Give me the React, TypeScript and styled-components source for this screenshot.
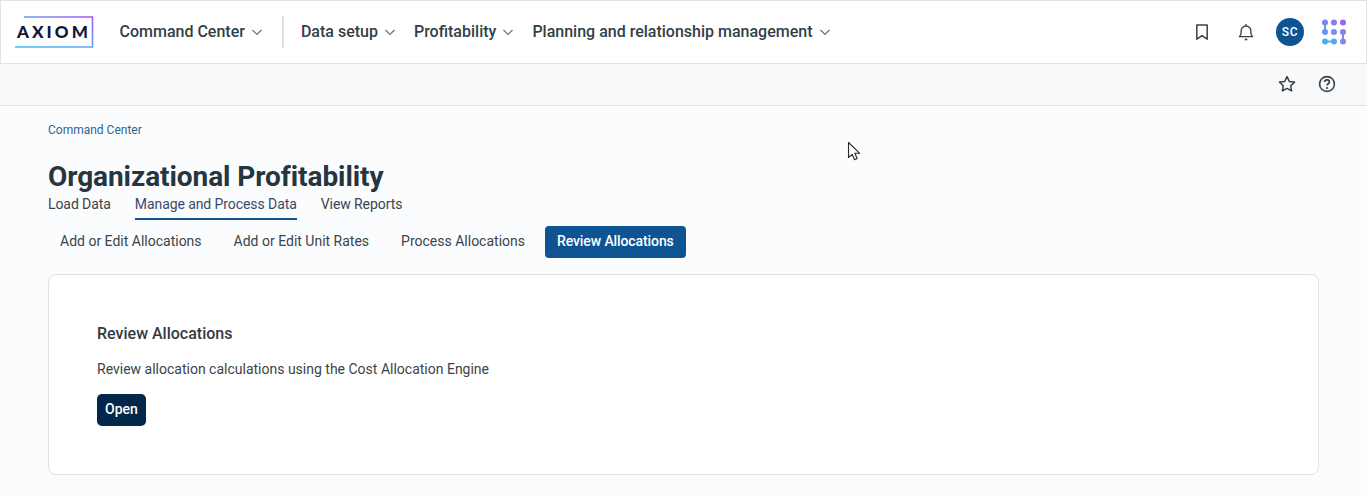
import React from "react";
import styled, { createGlobalStyle } from "styled-components";

const Global = createGlobalStyle`
  html, body { margin: 0; padding: 0; background: #fbfcfe; }
  body { font-family: Roboto, "Liberation Sans", sans-serif; color: #323a3f; }
  * { box-sizing: border-box; }
`;
const Page = styled.div`
  width: 1367px; height: 496px; overflow: hidden; position: relative; background: #fbfcfe;
`;
const Header = styled.header`
  height: 64px; background: #fff; border: 1px solid #dfe2e7;
  display: flex; align-items: center; padding: 0 19px 1px 14px;
`;
const Logo = styled.div`
  position: relative; width: 79px; height: 32px; flex: none;
  display: flex; align-items: center; justify-content: center;
  svg { position: absolute; inset: 0; }
`;
const LogoText = styled.span`
  font-family: Lato, sans-serif; font-weight: 900; font-size: 17px;
  letter-spacing: 3.1px; color: #14133b; padding-right: 1px; line-height: 1;
`;
const Nav = styled.nav`
  display: flex; align-items: center; margin-left: 25.5px;
`;
const NavItem = styled.div<{ $gap: number }>`
  display: flex; align-items: center; gap: 5px; font-size: 16px; font-weight: 500;
  color: #323f48; margin-right: ${p => p.$gap}px; white-space: nowrap;
  svg { color: #6b7278; }
`;
const NavDivider = styled.div`
  width: 2px; height: 32px; background: #d9dce1; margin-right: 17px;
`;
const HeaderActions = styled.div`
  margin-left: auto; display: flex; align-items: center;
`;
const ActionIcon = styled.span<{ $mr: number }>`
  display: flex; margin-right: ${p => p.$mr}px; color: #3a4044;
`;
const Avatar = styled.div`
  width: 28px; height: 28px; border-radius: 50%; background: #0f5492; color: #fff;
  font-size: 12px; font-weight: 500; letter-spacing: 0.6px;
  display: flex; align-items: center; justify-content: center; margin-right: 17px;
`;
const SubBar = styled.div`
  height: 42px; background: #f8f9fb; border-bottom: 1px solid #dfe2e7;
  display: flex; align-items: center; justify-content: flex-end; gap: 20px; padding: 0 30px 1px 0;
  color: #3a4044;
`;
const Main = styled.main`
  padding: 0 48px;
`;
const Crumb = styled.div`
  font-size: 12px; line-height: 14px; color: #2d6590; padding-top: 17px;
`;
const Title = styled.h1`
  margin: 22px 0 0; font-size: 28px; line-height: 36px; font-weight: 700; color: #263640;
  letter-spacing: -0.07px;
`;
const TopTabs = styled.div`
  display: flex; gap: 24px; margin-top: -1px; height: 26px;
`;
const TopTab = styled.div<{ $active?: boolean }>`
  font-size: 14px; line-height: 16px; padding-top: 2px; height: 26px; letter-spacing: -0.08px;
  color: ${p => (p.$active ? "#3b4a68" : "#3c4449")};
  border-bottom: 2px solid ${p => (p.$active ? "#0f5492" : "transparent")};
  white-space: nowrap;
`;
const SubTabs = styled.div`
  display: flex; gap: 8px; margin-top: 6px;
`;
const SubTab = styled.div<{ $active?: boolean }>`
  height: 32px; padding: 0 12px 2px; border-radius: 4px; font-size: 14px;
  display: flex; align-items: center; white-space: nowrap;
  font-weight: ${p => (p.$active ? 500 : 400)};
  letter-spacing: ${p => (p.$active ? "-0.1px" : "0")};
  color: ${p => (p.$active ? "#fff" : "#3c4449")};
  background: ${p => (p.$active ? "#0f5492" : "transparent")};
`;
const Card = styled.section`
  margin-top: 16px; width: 1271px; height: 201px; background: #fff;
  border: 1px solid #dfe2e7; border-radius: 8px; padding: 49px 48px 48px;
`;
const CardTitle = styled.h2`
  margin: 0; font-size: 16px; line-height: 20px; font-weight: 500; color: #323a3f;
`;
const CardText = styled.p`
  margin: 16px 0 0; font-size: 14px; line-height: 18px; color: #3c4449;
`;
const OpenButton = styled.button`
  display: block; margin-top: 16px; height: 32px; width: 49px; padding: 0 0 2px; border: 0;
  border-radius: 5px; background: #03274a; color: #fff;
  font: 500 14px Roboto, sans-serif;
`;
const Cursor = styled.svg`
  position: absolute; left: 847px; top: 141px;
`;

const Chevron = () => (
  <svg width="14" height="14" viewBox="0 0 14 14" fill="none" stroke="currentColor" strokeWidth="1.2">
    <path d="M2.5 5l4.5 4.5L11.5 5" />
  </svg>
);

export default function App() {
  return (
    <Page>
      <Global />
      <Header>
        <Logo>
          <svg width="79" height="32" viewBox="0 0 79 32" fill="none">
            <defs>
              <linearGradient id="lg" x1="0" y1="1" x2="1" y2="0">
                <stop offset="0" stopColor="#38bdf8" />
                <stop offset="0.5" stopColor="#60a5fa" />
                <stop offset="1" stopColor="#a855f7" />
              </linearGradient>
            </defs>
            <path d="M9 1H77.500V31H0" stroke="url(#lg)" strokeWidth="1.6" />
          </svg>
          <LogoText>AXIOM</LogoText>
        </Logo>
        <Nav>
          <NavItem $gap={18}>Command Center <Chevron /></NavItem>
          <NavDivider />
          <NavItem $gap={17}>Data setup <Chevron /></NavItem>
          <NavItem $gap={17}>Profitability <Chevron /></NavItem>
          <NavItem $gap={0}>Planning and relationship management <Chevron /></NavItem>
        </Nav>
        <HeaderActions>
          <ActionIcon $mr={24}>
            <svg width="20" height="20" viewBox="0 0 20 20" fill="none" stroke="currentColor" strokeWidth="1.5">
              <path d="M4.800 3h10.400v14.200L10 13.600l-5.200 3.600z" strokeLinejoin="round" />
            </svg>
          </ActionIcon>
          <ActionIcon $mr={20}>
            <svg width="20" height="20" viewBox="0 0 18 18" fill="none" stroke="currentColor" strokeWidth="1.2">
              <path d="M3 13.200h12c-1.200-1-1.600-2-1.600-3.600V8c0-2.400-1.800-4.400-4.400-4.400S4.600 5.600 4.600 8v1.600c0 1.600-.4 2.600-1.600 3.600z" strokeLinejoin="round" />
              <path d="M9 1.800v1.600" />
              <path d="M7.800 15.700h2.400" strokeWidth="1.500" />
            </svg>
          </ActionIcon>
          <Avatar>SC</Avatar>
          <svg width="26" height="26" viewBox="0 0 26 26" fill="none">
            <circle cx="4" cy="3.500" r="3" fill="#7c83f0" />
            <circle cx="13" cy="3.500" r="3" fill="#8b79f0" />
            <circle cx="22" cy="3.500" r="3" fill="#9a66f2" />
            <circle cx="4" cy="13" r="3" fill="#5f9bf0" />
            <circle cx="13" cy="13" r="3" fill="#7a8df0" />
            <circle cx="22" cy="13" r="3" fill="#8a7df0" />
            <circle cx="4" cy="22.500" r="3" fill="#46b0f8" />
            <circle cx="13" cy="22.500" r="3" fill="#50a8f6" />
            <circle cx="22" cy="22.500" r="3" fill="#7a8df0" />
            <path d="M4 3.500V13" stroke="#6a92f0" strokeWidth="2" />
            <path d="M22 13v9.500" stroke="#8485f0" strokeWidth="2" />
            <path d="M4 22.500h9" stroke="#4aacf8" strokeWidth="2" />
          </svg>
        </HeaderActions>
      </Header>
      <SubBar>
        <svg width="20" height="20" viewBox="0 0 20 20" fill="none" stroke="currentColor" strokeWidth="1.500" strokeLinejoin="round">
          <path d="M10 2.600l2.300 4.800 5.200.7-3.800 3.600.9 5.200L10 14.400l-4.600 2.500.9-5.200L2.500 8.100l5.200-.7z" />
        </svg>
        <svg width="20" height="20" viewBox="0 0 20 20" fill="none" stroke="currentColor" strokeWidth="1.600">
          <circle cx="10" cy="10" r="7.400" />
          <path d="M7.600 8.100c0-1.400 1.100-2.300 2.400-2.300s2.400.9 2.400 2.100c0 1.800-2.400 1.800-2.400 3.600" strokeWidth="1.700" />
          <circle cx="10" cy="14" r="1.100" fill="currentColor" stroke="none" />
        </svg>
      </SubBar>
      <Main>
        <Crumb>Command Center</Crumb>
        <Title>Organizational Profitability</Title>
        <TopTabs>
          <TopTab>Load Data</TopTab>
          <TopTab $active>Manage and Process Data</TopTab>
          <TopTab>View Reports</TopTab>
        </TopTabs>
        <SubTabs>
          <SubTab>Add or Edit Allocations</SubTab>
          <SubTab>Add or Edit Unit Rates</SubTab>
          <SubTab>Process Allocations</SubTab>
          <SubTab $active>Review Allocations</SubTab>
        </SubTabs>
        <Card>
          <CardTitle>Review Allocations</CardTitle>
          <CardText>Review allocation calculations using the Cost Allocation Engine</CardText>
          <OpenButton>Open</OpenButton>
        </Card>
      </Main>
      <Cursor width="16" height="22" viewBox="0 0 16 22">
        <path d="M1.500 1.500v15l3.600-3.200 2.500 5.500 2.600-1.200-2.400-5.300h5z" fill="#fff" stroke="#2a2a2a" strokeWidth="1.100" strokeLinejoin="round" />
      </Cursor>
    </Page>
  );
}
